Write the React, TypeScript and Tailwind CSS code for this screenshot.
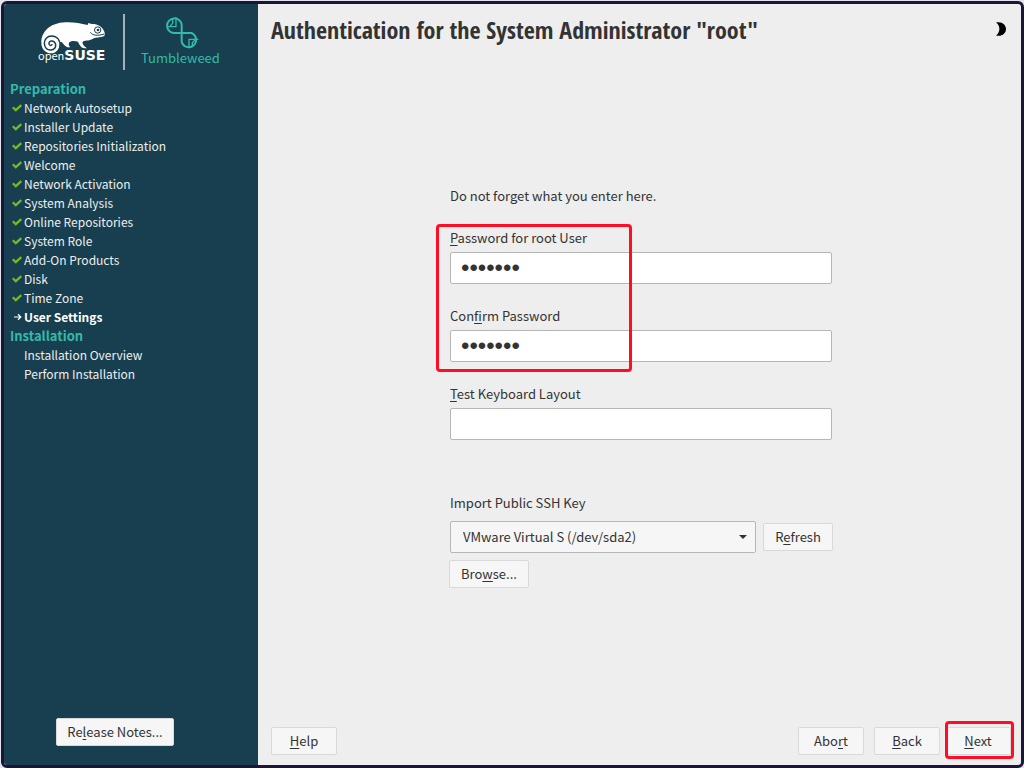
import React from "react";

const doneSteps = [
  "Network Autosetup",
  "Installer Update",
  "Repositories Initialization",
  "Welcome",
  "Network Activation",
  "System Analysis",
  "Online Repositories",
  "System Role",
  "Add-On Products",
  "Disk",
  "Time Zone",
];

function Check() {
  return (
    <svg className="h-2 w-3 shrink-0" viewBox="0 0 12 8" fill="none" stroke="#73ba25" strokeWidth="2.3" aria-hidden="true">
      <path d="M.8 3.200 3.800 6.200 9.300 1.200" />
    </svg>
  );
}

function Arrow() {
  return (
    <svg className="h-2 w-3 shrink-0" viewBox="0 0 12 8" fill="none" stroke="#fff" strokeWidth="1.2" aria-hidden="true">
      <path d="M2 4h6.500M6 1.300 8.800 4 6 6.700" />
    </svg>
  );
}

function Step({ icon, children }: { icon?: React.ReactNode; children: React.ReactNode }) {
  return (
    <li className="flex items-center">
      <span className="flex w-3 shrink-0">{icon}</span>
      {children}
    </li>
  );
}

function Key({ children }: { children: React.ReactNode }) {
  return <span className="underline decoration-1 underline-offset-2">{children}</span>;
}

function Button({ className = "", children }: { className?: string; children: React.ReactNode }) {
  return (
    <button
      type="button"
      className={`h-7 rounded-xs border border-[#d9d9d9] bg-[#f6f6f6] text-center text-[#333] ${className}`}
    >
      {children}
    </button>
  );
}

function Chameleon() {
  return (
    <svg className="h-[36px] w-[70px]" viewBox="114 57 210 108" fill="none" aria-hidden="true">
      <path
        fill="#fff"
        d="M124 125C124 92 150 66 196 64C222 63 240 67 263 72L265 66L275 69C292 68 304 76 310 86C316 96 316 103 311 106C300 110 286 108 276 115C266 121 252 117 248 123C246 130 254 137 262 142L252 142C242 139 238 131 234 122C224 119 214 119 208 124C204 129 207 135 211 139L202 139C193 135 190 127 185 123C180 122 180 125 179 128C178 145 168 157 153 157C136 157 124 143 124 125Z"
      />
      <path
        stroke="#173f4f"
        strokeWidth="4.5"
        strokeLinecap="round"
        d="M181 138C181 116 170 105 155 105C141 105 133 115 133 127C133 140 142 148 153 147C163 146 168 139 167 131C166 124 160 119 154 120C148 121 145 126 148 131C150 134 154 134 156 131"
      />
      <circle cx="293" cy="87" r="9.5" stroke="#173f4f" strokeWidth="3" />
      <circle cx="294" cy="87" r="4" fill="#173f4f" />
      <path stroke="#173f4f" strokeWidth="3" d="M271 94C277 104 295 105 313 99" />
    </svg>
  );
}

function TumbleweedMark() {
  return (
    <svg className="h-[35px] w-[35px]" viewBox="105 15 105 105" fill="none" stroke="#35b9ab" strokeWidth="6" aria-hidden="true">
      <path d="M158 69H131A22 22 0 1 1 155 44V69V95A22 22 0 1 0 184 69H158Z" />
      <path strokeWidth="4" d="M110 50H138V22M119 50L128 40V26" />
      <path strokeWidth="4" d="M205 88H177V115M187 112V98L197 88" />
    </svg>
  );
}

function Field({
  id,
  label,
  type,
  value,
  className = "",
}: {
  id: string;
  label: React.ReactNode;
  type: string;
  value?: string;
  className?: string;
}) {
  return (
    <div className="flex flex-col gap-1">
      <label htmlFor={id} className="leading-5">{label}</label>
      <input
        id={id}
        type={type}
        defaultValue={value}
        className={`h-8 w-full rounded-xs border border-[#b6b6b6] bg-white px-2.5 text-[#333] outline-none ${className}`}
      />
    </div>
  );
}

const masked = "font-['Liberation_Sans',sans-serif] text-[24px]";

export default function App() {
  return (
    <div className="flex min-h-screen bg-[#dfe5ea] pt-px pl-px font-['Noto_Sans_CJK_SC','Source_Sans_Pro',sans-serif] text-[13px] text-[#333]">
      <div className="flex flex-1 overflow-hidden rounded-md border-3 border-[#1c1538] bg-[#eee]">
        <aside className="flex w-[254px] shrink-0 flex-col bg-[#173f4f] text-[#eee]">
          <div className="flex h-[66px] pt-2.5 pl-[34px]">
            <div className="flex w-[85px] flex-col pt-1.5">
              <Chameleon />
              <div className="-mt-2 flex items-baseline leading-[14px] text-white">
                <span className="text-[11px]">open</span>
                <span className="font-['DejaVu_Sans',sans-serif] text-[14px] font-bold">SUSE</span>
              </div>
            </div>
            <div className="h-14 w-0.5 bg-[#a3b2b9]" />
            <div className="flex flex-1 flex-col pt-px pl-4 text-[#35b9ab]">
              <div className="flex pl-6">
                <TumbleweedMark />
              </div>
              <span className="-mt-0.5 text-[13px] leading-5">Tumbleweed</span>
            </div>
          </div>
          <nav className="mt-[9px] pl-1.5 leading-[19px]" aria-label="Installation steps">
            <h2 className="font-bold text-[#35b9ab]">Preparation</h2>
            <ul className="pl-0.5 text-xs leading-[19px]">
              {doneSteps.map((s) => (
                <Step key={s} icon={<Check />}>{s}</Step>
              ))}
              <Step icon={<Arrow />}>
                <b className="text-white">User Settings</b>
              </Step>
            </ul>
            <h2 className="font-bold text-[#35b9ab]">Installation</h2>
            <ul className="pl-0.5 text-xs leading-[19px]">
              <Step>Installation Overview</Step>
              <Step>Perform Installation</Step>
            </ul>
          </nav>
          <div className="mt-auto pb-[19px] pl-[52px]">
            <Button className="w-[118px]">
              Re<Key>l</Key>ease Notes...
            </Button>
          </div>
        </aside>

        <main className="flex flex-1 flex-col pr-2.5 pb-2.5 pl-[13px]">
          <header className="flex h-[42px] items-start justify-between pt-2.5">
            <h1 className="font-['Noto_Sans_ExtraCondensed','Noto_Sans_Extra_Condensed','Open_Sans_Condensed','Noto_Sans_Condensed','Liberation_Sans_Narrow',sans-serif] text-[24px] leading-8 font-bold">
              Authentication for the System Administrator "root"
            </h1>
            <svg className="mt-2 mr-[5px] h-3.5 w-2.5" viewBox="0 0 10 14" aria-hidden="true">
              <path d="M0 .6C5.500-1 10 2.500 10 7s-4.500 8-10 6.400C4.500 10.500 4.500 3.500 0 .6z" />
            </svg>
          </header>

          <form className="m-auto flex w-full max-w-[384px] flex-col">
            <div className="flex flex-col px-px">
              <p className="leading-5">Do not forget what you enter here.</p>
              <div className="relative mt-[22px] flex flex-col gap-[22px]">
                <Field id="password" type="password" value="openqax" className={masked} label={<><Key>P</Key>assword for root User</>} />
                <Field id="confirm" type="password" value="openqax" className={masked} label={<>Con<Key>f</Key>irm Password</>} />
                <div className="pointer-events-none absolute -top-1 -bottom-2.5 -left-3.5 w-[196px] rounded-sm border-3 border-[#ff0d25]" />
              </div>
              <div className="mt-[22px]">
                <Field id="layout" type="text" label={<><Key>T</Key>est Keyboard Layout</>} />
              </div>
              <label htmlFor="device" className="mt-[53px] leading-5">Import Public SSH Key</label>
            </div>
            <div className="mt-2 flex items-center gap-[7px] pl-px">
              <div className="relative flex flex-1">
                <select
                  id="device"
                  className="h-8 w-full appearance-none rounded-xs border border-[#b6b6b6] bg-[#f6f6f6] pl-3 text-[#333] outline-none"
                >
                  <option>VMware Virtual S (/dev/sda2)</option>
                </select>
                <svg className="pointer-events-none absolute top-3.5 right-[9px] h-1 w-2" viewBox="0 0 8 4" fill="#333" aria-hidden="true">
                  <path d="M0 0h8L4 4z" />
                </svg>
              </div>
              <Button className="w-[70px]">
                R<Key>e</Key>fresh
              </Button>
            </div>
            <div className="mt-[7px]">
              <Button className="w-20">
                Bro<Key>w</Key>se...
              </Button>
            </div>
          </form>

          <footer className="flex items-center">
            <Button className="mr-auto w-[66px]">
              <Key>H</Key>elp
            </Button>
            <div className="mr-[5px] flex gap-2.5">
              <Button className="w-[66px]">
                Abo<Key>r</Key>t
              </Button>
              <Button className="w-[66px]">
                <Key>B</Key>ack
              </Button>
            </div>
            <div className="relative">
              <Button className="w-[66px]">
                <Key>N</Key>ext
              </Button>
              <div className="pointer-events-none absolute -top-1.5 -right-[3px] -bottom-1 left-0 rounded-sm border-3 border-[#ff0d25]" />
            </div>
          </footer>
        </main>
      </div>
    </div>
  );
}
